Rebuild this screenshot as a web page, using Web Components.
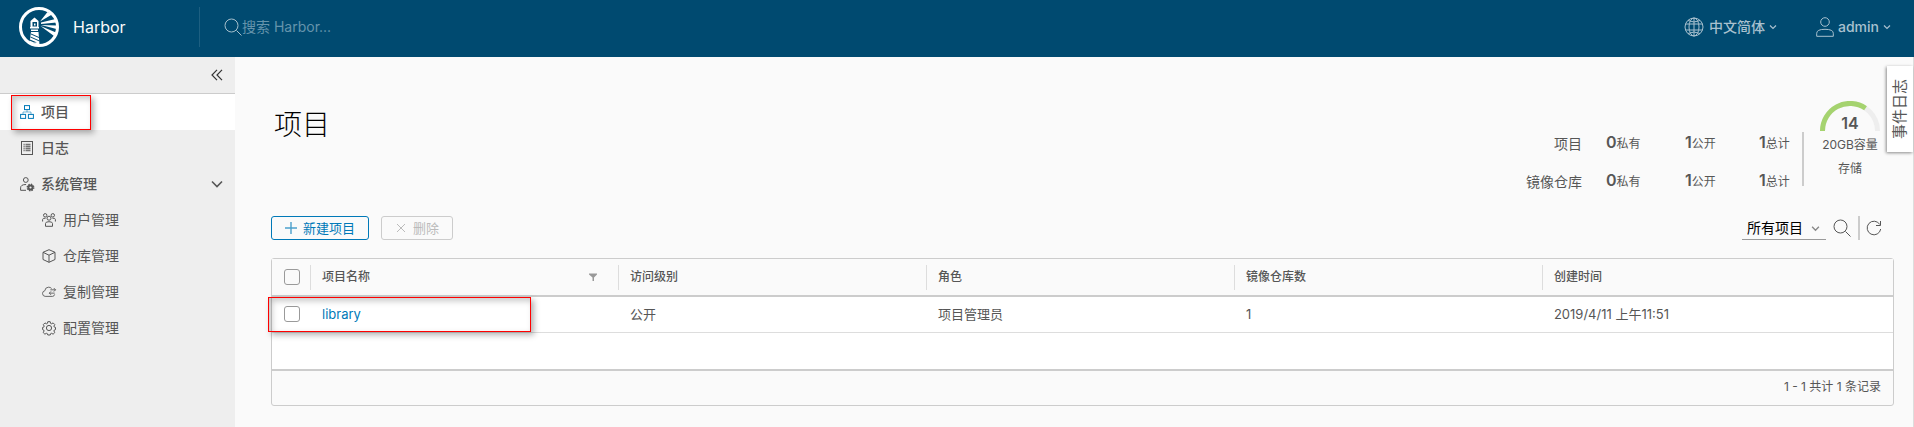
<!DOCTYPE html>
<html lang="zh-CN">
<head>
<meta charset="utf-8">
<title>Harbor</title>
<style>
html, body { margin: 0; height: 100%; }
body { font-family: Inter, "Noto Sans CJK SC", sans-serif; font-size: 14px; line-height: 24px; color: #565656; background: #fafafa; }
</style>
</head>
<body>
<harbor-app></harbor-app>
<script>
const icons = {
  search: ['0 0 18 18', '<circle cx="7.500" cy="7.500" r="6.500"/><path d="M12.500 12.500l5 5"/>'],
  globe: ['0 0 20 20', '<circle cx="10" cy="10" r="9"/><ellipse cx="10" cy="10" rx="5" ry="9"/><path d="M10 1v18M1.500 7h17M1.500 13h17M4 3.500q6 3 12 0M4 16.500q6-3 12 0"/>'],
  user: ['0 0 18 20', '<circle cx="9" cy="5" r="4.300"/><path d="M.7 19.300v-3q0-4 8.300-4t8.300 4v3z"/>'],
  down: ['0 0 8 8', '<path d="M1 2.500l3 3 3-3" stroke-width="1.200"/>'],
  expand: ['0 0 12 12', '<path d="M1 3.500l5 5 5-5" stroke-width="1.600"/>'],
  collapse: ['0 0 12 12', '<path d="M6 .8L1 6l5 5.200M11 .8L6 6l5 5.200" stroke-width="1.200"/>'],
  tree: ['0 0 14 14', '<rect x="4.500" y=".6" width="5" height="4"/><rect x=".6" y="9.400" width="5" height="4"/><rect x="8.400" y="9.400" width="5" height="4"/><path d="M7 4.600v2.400M3 9.400V7h8v2.400" opacity=".55"/>'],
  log: ['0 0 14 14', '<rect x="1.500" y=".5" width="11" height="13"/><path d="M3.500 3.500h1.200M5.500 3.500h5M3.500 5.500h1.200M5.500 5.500h5M3.500 7.500h1.200M5.500 7.500h5M3.500 9.500h1.200M5.500 9.500h5" stroke-width="1.300" opacity=".8"/>'],
  admin: ['0 0 14 14', '<circle cx="5.800" cy="3" r="2.400"/><path d="M6 13.300H.6v-2.400q0-3.400 5.500-3.400"/><circle cx="10.500" cy="10.500" r="2.100" stroke-width="2"/><circle cx="10.500" cy="10.500" r="3.300" stroke-width="1.300" stroke-dasharray="1.400 1.200"/>'],
  users: ['0 0 14 14', '<circle cx="7" cy="5.200" r="2"/><circle cx="3.200" cy="2.300" r="1.700"/><circle cx="10.800" cy="2.300" r="1.700"/><path d="M3.500 13.300V10.500Q3.500 8.700 7 8.700t3.500 1.800v2.800zM.6 8.500V6.500Q.6 5 3.600 5.200M13.400 8.500V6.500q0-1.500-3-1.300"/>'],
  cube: ['0 0 14 14', '<path d="M7 .7l6 2.600v7.200l-6 2.800-6-2.800V3.300zM1 3.300l6 2.900 6-2.900M7 6.200v7.100"/>'],
  cloud: ['0 0 16 14', '<path d="M11 3Q9.500 1.300 7.200 1.500 3.500 1.800 3.300 5.500.6 6 .6 8.800q.2 3 3 3.200h8.500q2-.2 2.400-2.300M9.500 4.500h6M13.500 2.500l2 2-2 2M14.500 8.300H8.300M10.300 6.300l-2 2 2 2"/>'],
  gear: ['0 0 14 14', '<circle cx="7" cy="7" r="2.600"/><path d="M5.800.7h2.400l.4 1.700 1 .4 1.500-.9 1.700 1.700-.9 1.500.4 1 1.200.3v2.200l-1.200.4-.4 1 .9 1.500-1.700 1.700-1.500-.9-1 .4-.4 1.300H5.800l-.4-1.300-1-.4-1.500.9-1.700-1.700.9-1.500-.4-1L.6 8.600V6.400l1.200-.3.4-1-.9-1.500L3 1.900l1.400.9 1-.4z"/>'],
  plus: ['0 0 12 12', '<path d="M6 0v12M0 6h12" stroke-width="1.400" opacity=".7"/>'],
  times: ['0 0 12 12', '<path d="M2 2l8 8M10 2l-8 8"/>'],
  refresh: ['0 0 16 16', '<path d="M13.800 4.500A6.800 6.800 0 1 0 14.700 9M14.500 1v4.500H10"/>'],
  filter: ['0 0 10 10', '<path d="M1 1.500h8v1L6 5.500v3.500H4.500V5.500L1 2.500z" fill="currentColor" stroke="none"/>']
};

function define(name, html, setup) {
  const template = document.createElement('template');
  template.innerHTML = '<style>*{box-sizing:border-box}</style>' + html;
  customElements.define(name, class extends HTMLElement {
    constructor() {
      super();
      this.attachShadow({ mode: 'open' }).append(template.content.cloneNode(true));
    }
    connectedCallback() { if (setup) setup(this, this.shadowRoot); }
  });
}

define('hb-icon', `<style>
:host { display: inline-flex; flex: none; width: 14px; height: 14px; }
svg { width: 100%; height: 100%; fill: none; stroke: currentColor; overflow: visible; }
</style><svg aria-hidden="true"></svg>`, (el, root) => {
  const [box, shape] = icons[el.getAttribute('name')];
  const svg = root.querySelector('svg');
  svg.setAttribute('viewBox', box);
  svg.innerHTML = shape;
});

define('hb-logo', `<style>
:host { display: block; width: 40px; height: 40px; }
svg { display: block; }
</style>
<svg viewBox="0 0 40 40" width="40" height="40" fill="#fff" role="img" aria-label="Harbor">
<circle cx="20" cy="20" r="18.500" fill="none" stroke="#fff" stroke-width="3"/>
<path d="M15.500 10.500l4 3.500v6.500h-8V14zM11 20h9v1.500h-9zM12 22.500h7V24h-7zM12 25h7.500l1 12.500L10.500 36z"/>
<path d="M13.500 15h4.500v4.500h-4.500z" fill="#004a70"/><path d="M15 16.500h1.500v2H15z"/>
<path d="M12 26.500l8 3.500v1l-8-3.500zM11.500 29.500l9 4v1l-9-4zM11 32.500l7 3h-3l-4-1.800z" fill="#004a70"/>
<path d="M21 14.500L28.500 5l4.500 2.500zM22 15.500l14.500-3.500 1 3.500L22 17zM22 18l15.500.5v3.500zM21.500 19L37 25.500l-2 3.500z"/>
</svg>`);

define('hb-highlight', `<style>
:host { position: absolute; border: 1px solid #f00; pointer-events: none; z-index: 2;
  box-shadow: 3px 3px 6px rgba(0,0,0,.3), inset 3px 3px 6px rgba(0,0,0,.22); }
</style>`);

define('hb-header', `<style>
:host { display: flex; align-items: center; min-height: 57px; padding: 0 23px 3px 19px; background: #004a70; color: #fafafa; }
.brand { display: flex; align-items: center; gap: 14px; width: 181px; height: 40px; color: inherit; text-decoration: none; font-size: 16px; border-right: 1px solid #1d5f81; }
label { display: flex; align-items: center; flex: 1; padding-left: 24px; color: #a6c0cd; }
label hb-icon { width: 18px; height: 18px; }
input { flex: 1; min-width: 0; padding: 0; border: 0; outline: 0; background: none; color: #fff; font: inherit; line-height: 24px; }
input::placeholder { color: #6594ac; opacity: 1; }
nav { display: flex; gap: 39px; }
button { display: flex; align-items: center; gap: 2px; padding: 0; border: 0; background: none; color: #a9c1cf; font: inherit; font-weight: 500; }
.lang hb-icon:first-child { width: 20px; height: 20px; margin-right: 3px; }
.user hb-icon:first-child { width: 18px; height: 20px; margin-right: 2px; }
button hb-icon:last-child { width: 8px; height: 8px; margin-left: 2px; }
</style>
<a class="brand" href="#"><hb-logo></hb-logo><span>Harbor</span></a>
<label><hb-icon name="search"></hb-icon><input type="text" placeholder="搜索 Harbor..." aria-label="搜索"></label>
<nav>
<button class="lang"><hb-icon name="globe"></hb-icon><span>中文简体</span><hb-icon name="down"></hb-icon></button>
<button class="user"><hb-icon name="user"></hb-icon><span>admin</span><hb-icon name="down"></hb-icon></button>
</nav>`);

define('hb-nav-item', `<style>
:host { display: block; position: relative; }
a { display: flex; align-items: center; gap: 7px; height: 36px; padding: 0 12px 0 20px; color: #565656; text-decoration: none; font-weight: 500; }
span { flex: 1; }
:host([sub]) a { padding-left: 42px; font-weight: 400; }
:host([active]) a { background: #fff; }
:host([active]) hb-icon { color: #0079b8; }
.more { width: 12px; height: 12px; }
</style><a href="#"></a><slot></slot>`, (el, root) => {
  const more = el.hasAttribute('group') ? '<hb-icon class="more" name="expand"></hb-icon>' : '';
  root.querySelector('a').innerHTML = `<hb-icon name="${el.getAttribute('icon')}"></hb-icon><span>${el.getAttribute('label')}</span>${more}`;
});

define('hb-sidebar', `<style>
:host { display: block; width: 235px; background: #eee; }
.top { display: flex; justify-content: flex-end; align-items: center; height: 37px; padding-right: 12px; border-bottom: 1px solid #ccc; }
button { display: flex; padding: 0; border: 0; background: none; color: #333; }
button hb-icon { width: 12px; height: 12px; }
hb-highlight { inset: 1px 144px 0 11px; }
</style>
<div class="top"><button aria-label="收起"><hb-icon name="collapse"></hb-icon></button></div>
<nav>
<hb-nav-item icon="tree" label="项目" active><hb-highlight></hb-highlight></hb-nav-item>
<hb-nav-item icon="log" label="日志"></hb-nav-item>
<hb-nav-item icon="admin" label="系统管理" group></hb-nav-item>
<hb-nav-item icon="users" label="用户管理" sub></hb-nav-item>
<hb-nav-item icon="cube" label="仓库管理" sub></hb-nav-item>
<hb-nav-item icon="cloud" label="复制管理" sub></hb-nav-item>
<hb-nav-item icon="gear" label="配置管理" sub></hb-nav-item>
</nav>`);

define('hb-stats', `<style>
:host { display: flex; align-items: flex-start; }
dl { display: grid; grid-template-columns: 56px 55px 50px 31px; grid-auto-rows: 24px; gap: 14px 24px; height: 54px; margin: 32px 0 0; padding-right: 12px; border-right: 2px solid #ccc; }
dl { align-content: start; }
dt, dd { margin: 0; white-space: nowrap; }
dt { text-align: right; }
dd { font-size: 12px; }
b { font-size: 16px; font-weight: 600; line-height: 20px; }
.gauge { display: flex; flex-direction: column; align-items: center; width: 62px; margin: 1px 0 0 15px; font-size: 12px; }
svg { display: block; width: 60px; height: 30px; }
.value { margin: -20px 0 -2px; font-size: 16px; font-weight: 600; line-height: 24px; }
</style>
<dl>
<dt>项目</dt><dd><b>0</b>私有</dd><dd><b>1</b>公开</dd><dd><b>1</b>总计</dd>
<dt>镜像仓库</dt><dd><b>0</b>私有</dd><dd><b>1</b>公开</dd><dd><b>1</b>总计</dd>
</dl>
<div class="gauge">
<svg viewBox="0 0 60 30" fill="none" stroke-width="5" aria-hidden="true"><path d="M2.500 30a27.500 27.500 0 0 1 55 0" stroke="#eee"/><path d="M2.500 30A27.500 27.500 0 0 1 45.500 7.200" stroke="#a5d36f"/></svg>
<span class="value">14</span><span>20GB容量</span><span>存储</span>
</div>`);

define('hb-toolbar', `<style>
:host { display: flex; align-items: center; gap: 12px; }
button { display: flex; align-items: center; gap: 6px; height: 24px; padding: 0 13px; border: 1px solid #0079b8; border-radius: 3px; background: none; color: #0079b8; font: inherit; font-size: 13px; line-height: 22px; }
button:disabled { border-color: #ccc; color: #bbb; }
button hb-icon { width: 12px; height: 12px; }
.tools { display: flex; align-items: center; margin-left: auto; }
.select { display: flex; position: relative; width: 84px; height: 24px; border-bottom: 1px solid #9a9a9a; }
select { width: 100%; padding: 0 0 0 5px; border: 0; background: none; appearance: none; color: #000; font: inherit; line-height: 22px; }
.select hb-icon { position: absolute; right: 6px; top: 8px; width: 9px; height: 9px; color: #888; pointer-events: none; }
.tools button { padding: 0; border: 0; color: #565656; }
.find { margin-left: 7px; }
.find hb-icon { width: 18px; height: 18px; }
.reload hb-icon { width: 16px; height: 16px; }
hr { width: 2px; height: 24px; margin: 0 6px 0 7px; border: 0; background: #ccc; }
</style>
<button><hb-icon name="plus"></hb-icon>新建项目</button>
<button disabled><hb-icon name="times"></hb-icon>删除</button>
<div class="tools">
<div class="select"><select aria-label="项目筛选"><option>所有项目</option></select><hb-icon name="down"></hb-icon></div>
<button class="find" aria-label="搜索"><hb-icon name="search"></hb-icon></button>
<hr>
<button class="reload" aria-label="刷新"><hb-icon name="refresh"></hb-icon></button>
</div>`);

define('hb-datagrid', `<style>
:host { display: block; position: relative; border: 1px solid #ccc; border-radius: 3px; }
table { width: 100%; border-collapse: collapse; table-layout: fixed; background: #fff; }
th { height: 37px; padding: 0 12px; text-align: left; font-size: 12px; font-weight: 500; line-height: 24px; background: #fafafa; }
thead tr { border-bottom: 2px solid #ccc; }
th + th { background: linear-gradient(#ddd, #ddd) left center / 1px 25px no-repeat #fafafa; }
td { height: 36px; padding: 0 12px; font-size: 13px; line-height: 24px; border-bottom: 1px solid #ddd; }
td[colspan] { height: 37px; border: 0; }
.check { width: 38px; }
.col { width: 19%; }
input { display: block; appearance: none; width: 16px; height: 16px; margin: 0; border: 1px solid #9a9a9a; border-radius: 3px; background: #fff; }
th input { background: none; }
.title { display: flex; justify-content: space-between; align-items: center; }
.title button { display: flex; margin-right: 8px; padding: 0; border: 0; background: none; color: #999; }
.title hb-icon { width: 10px; height: 10px; }
a { color: #0079b8; text-decoration: none; }
footer { display: flex; justify-content: flex-end; height: 36px; padding: 4px 12px 0; border-top: 2px solid #ccc; font-size: 12px; line-height: 24px; }
hb-highlight { left: -4px; top: 38px; width: 263px; height: 35px; }
</style>
<table>
<colgroup><col class="check"><col class="col"><col class="col"><col class="col"><col class="col"><col></colgroup>
<thead><tr><th><input type="checkbox" aria-label="全选"></th>
<th><div class="title">项目名称<button aria-label="过滤"><hb-icon name="filter"></hb-icon></button></div></th><th>访问级别</th><th>角色</th><th>镜像仓库数</th><th>创建时间</th></tr></thead>
<tbody><tr><td><input type="checkbox" aria-label="library"></td><td><a href="#">library</a></td><td>公开</td><td>项目管理员</td><td>1</td><td>2019/4/11 上午11:51</td></tr>
<tr><td colspan="6"></td></tr></tbody>
</table>
<footer>1 - 1 共计 1 条记录</footer>
<hb-highlight></hb-highlight>`);

define('hb-event-tab', `<style>
:host { position: absolute; right: 0; top: 9px; z-index: 1; }
button { display: flex; align-items: center; justify-content: center; width: 26px; height: 86px; padding: 0; border: 0; background: #fff; box-shadow: -1px 1px 3px rgba(0,0,0,.45); color: #565656; font: inherit; font-size: 15px; }
span { writing-mode: sideways-lr; line-height: 24px; }
</style><button><span>事件日志</span></button>`);

define('hb-projects', `<style>
:host { display: block; position: relative; flex: 1; min-width: 0; padding: 43px 19px 20px 36px; border-right: 1px solid #ddd; }
.head { display: flex; justify-content: space-between; align-items: flex-start; min-height: 116px; }
h1 { margin: 5px 0 0 3px; font-size: 28px; font-weight: 300; line-height: 40px; color: #000; }
hb-stats { margin-right: 13px; }
hb-datagrid { margin-top: 18px; }
hb-toolbar { margin-right: 12px; }
</style>
<div class="head"><h1>项目</h1><hb-stats></hb-stats></div>
<hb-toolbar></hb-toolbar>
<hb-datagrid></hb-datagrid>
<hb-event-tab></hb-event-tab>`);

define('harbor-app', `<style>
:host { display: flex; flex-direction: column; min-height: 100%; }
main { display: flex; flex: 1; }
</style>
<hb-header></hb-header>
<main><hb-sidebar></hb-sidebar><hb-projects></hb-projects></main>`);
</script>
</body>
</html>
